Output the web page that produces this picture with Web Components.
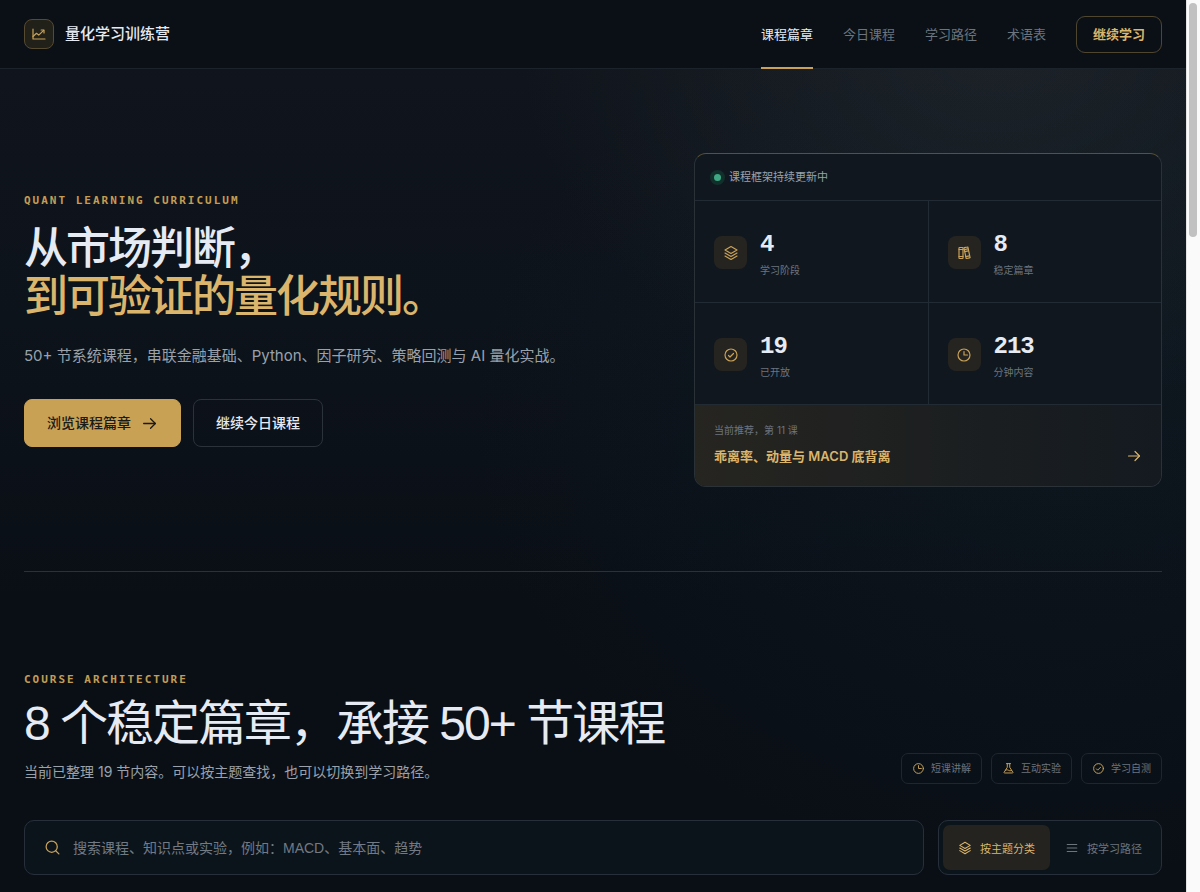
<!DOCTYPE html>
<html lang="zh-CN">
<head>
<meta charset="UTF-8" />
<meta name="viewport" content="width=device-width, initial-scale=1" />
<title>量化学习训练营</title>
<style>
  :root {
    --gold: #c9a257;
    --gold-bright: #dbb56c;
    --text: #e6eaf3;
    --text-soft: #9aa1ab;
    --text-muted: #6c747e;
    --line: #222b33;
    --display: "Liberation Sans", "Noto Sans CJK SC", sans-serif;
  }
  body {
    margin: 0;
    background: #0a0f16;
    color: var(--text);
    font-family: Inter, "Noto Sans CJK SC", sans-serif;
  }
</style>
</head>
<body>
<app-shell>
  <site-header slot="header">
    <nav-link href="#chapters" active>课程篇章</nav-link>
    <nav-link href="#today">今日课程</nav-link>
    <nav-link href="#path">学习路径</nav-link>
    <nav-link href="#glossary">术语表</nav-link>
  </site-header>

  <hero-section>
    <eye-brow>QUANT LEARNING CURRICULUM</eye-brow>
    <span slot="title">从市场判断，</span>
    <span slot="accent">到可验证的量化规则。</span>
    <span slot="lead">50+ 节系统课程，串联金融基础、Python、因子研究、策略回测与 AI 量化实战。</span>
    <action-button slot="actions" href="#chapters" variant="primary" icon="arrow">浏览课程篇章</action-button>
    <action-button slot="actions" href="#today">继续今日课程</action-button>
    <course-panel slot="panel">
      <span slot="status">课程框架持续更新中</span>
      <stat-cell icon="stack" value="4">学习阶段</stat-cell>
      <stat-cell icon="books" value="8">稳定篇章</stat-cell>
      <stat-cell icon="check" value="19">已开放</stat-cell>
      <stat-cell icon="clock" value="213">分钟内容</stat-cell>
      <span slot="hint">当前推荐，第 11 课</span>
      <span slot="lesson">乖离率、动量与 MACD 底背离</span>
    </course-panel>
  </hero-section>

  <course-section id="chapters">
    <eye-brow slot="eyebrow">COURSE ARCHITECTURE</eye-brow>
    <span slot="title">8 个稳定篇章，承接 50+ 节课程</span>
    <span slot="lead">当前已整理 19 节内容。可以按主题查找，也可以切换到学习路径。</span>
    <feature-chip slot="chips" icon="clock">短课讲解</feature-chip>
    <feature-chip slot="chips" icon="flask">互动实验</feature-chip>
    <feature-chip slot="chips" icon="check">学习自测</feature-chip>
    <search-box slot="tools" placeholder="搜索课程、知识点或实验，例如：MACD、基本面、趋势"></search-box>
    <view-switch slot="tools"></view-switch>
  </course-section>
</app-shell>

<script>
// Icons are drawn on a 256 grid
const ICONS = {
  chart: `<path d="M32 48v160h192"/><path d="m32 168 56-52 36 30 78-76"/><path d="M162 64h46v46"/>`,
  stack: `<path d="m32 80 96 56 96-56-96-56Z"/><path d="m32 128 96 56 96-56"/><path d="m32 176 96 56 96-56"/>`,
  books: `<rect x="48" y="40" width="64" height="176" rx="8"/><path d="M48 72h64M48 184h64"/>
    <path d="m134 42 47-10a8 8 0 0 1 10 6l33 158a8 8 0 0 1-6 10l-47 10a8 8 0 0 1-10-6L128 52a8 8 0 0 1 6-10Z"/>
    <path d="m135 75 55-12M141 106l55-12M158 186l55-12"/>`,
  check: `<circle cx="128" cy="128" r="96"/><path d="m88 136 24 24 56-56"/>`,
  clock: `<circle cx="128" cy="128" r="96"/><path d="M128 72v56h56"/>`,
  arrow: `<path d="M40 128h176"/><path d="m144 56 72 72-72 72"/>`,
  search: `<circle cx="116" cy="116" r="84"/><path d="m176 176 48 48"/>`,
  flask: `<path d="M88 32h80"/><path d="M104 32v72L41 204a8 8 0 0 0 7 12h160a8 8 0 0 0 7-12l-63-100V32"/><path d="M68 162c26-14 44-8 62 2s36 12 58 2"/>`,
  list: `<path d="M40 64h176M40 128h176M40 192h176"/>`,
};

class UiIcon extends HTMLElement {
  constructor() {
    super();
    this.shadow = this.attachShadow({ mode: "open" });
  }

  connectedCallback() {
    this.shadow.innerHTML = `
      <style>
        :host {
          display: block;
          flex: none;
          width: 16px;
          height: 16px;
        }
        svg {
          display: block;
          width: 100%;
          height: 100%;
          fill: none;
          stroke: currentColor;
          stroke-width: 19;
          stroke-linecap: round;
          stroke-linejoin: round;
        }
      </style>
      <svg viewBox="0 0 256 256" aria-hidden="true">${ICONS[this.getAttribute("name")]}</svg>
    `;
  }
}

class AppShell extends HTMLElement {
  constructor() {
    super();
    this.shadow = this.attachShadow({ mode: "open" });
  }

  connectedCallback() {
    this.shadow.innerHTML = `
      <style>
        :host {
          display: grid;
          grid-template-columns: minmax(0, 1fr) 14px;
          height: 100vh;
          overflow: hidden;
        }
        .page {
          overflow: hidden;
          background:
            radial-gradient(ellipse 480px 380px at 84% 40px, rgba(110, 125, 115, 0.12), transparent),
            radial-gradient(ellipse 600px 460px at 90% 420px, rgba(30, 70, 80, 0.1), transparent),
            linear-gradient(180deg, #11151d 0, #0d131b 320px, #0a0f16 600px);
        }
        .track {
          background: #fafafa;
          border-left: 1px solid #e4e4e4;
          padding: 3px 2px;
        }
        .thumb {
          height: 234px;
          width: 8px;
          border-radius: 4px;
          background: #c1c1c1;
        }
      </style>
      <div class="page">
        <slot name="header"></slot>
        <main><slot></slot></main>
      </div>
      <div class="track"><div class="thumb"></div></div>
    `;
  }
}

class SiteHeader extends HTMLElement {
  constructor() {
    super();
    this.shadow = this.attachShadow({ mode: "open" });
  }

  connectedCallback() {
    this.shadow.innerHTML = `
      <style>
        :host {
          display: block;
        }
        header {
          display: flex;
          align-items: center;
          justify-content: space-between;
          height: 68px;
          padding: 0 24px;
          background: #0a1016;
          border-bottom: 1px solid #1c242b;
        }
        .brand {
          display: flex;
          align-items: center;
          gap: 11px;
          color: var(--text);
          font-size: 15px;
          font-weight: 500;
          line-height: 28px;
          text-decoration: none;
        }
        .mark {
          display: grid;
          place-items: center;
          width: 28px;
          height: 28px;
          border: 1px solid #564a31;
          border-radius: 8px;
          background: #222119;
          color: var(--gold);
        }
        .right, nav {
          display: flex;
          align-items: center;
          gap: 30px;
        }
        .cta {
          padding: 0 16px;
          border: 1px solid #4f4630;
          border-radius: 9px;
          color: var(--gold-bright);
          font-size: 13px;
          font-weight: 700;
          line-height: 35px;
          text-decoration: none;
        }
      </style>
      <header>
        <a class="brand" href="#"><span class="mark"><ui-icon name="chart"></ui-icon></span>量化学习训练营</a>
        <div class="right">
          <nav><slot></slot></nav>
          <a class="cta" href="#continue">继续学习</a>
        </div>
      </header>
    `;
  }
}

class NavLink extends HTMLElement {
  constructor() {
    super();
    this.shadow = this.attachShadow({ mode: "open" });
  }

  connectedCallback() {
    this.shadow.innerHTML = `
      <style>
        :host {
          display: block;
          font-size: 13px;
        }
        a {
          display: block;
          position: relative;
          color: var(--text-muted);
          line-height: 68px;
          text-decoration: none;
        }
        :host([active]) a {
          color: var(--text);
        }
        :host([active]) a::after {
          content: "";
          position: absolute;
          left: 0;
          right: 0;
          bottom: -1px;
          height: 2px;
          background: var(--gold);
        }
      </style>
      <a href="${this.getAttribute("href")}"><slot></slot></a>
    `;
  }
}

class EyeBrow extends HTMLElement {
  constructor() {
    super();
    this.shadow = this.attachShadow({ mode: "open" });
  }

  connectedCallback() {
    this.shadow.innerHTML = `
      <style>
        :host {
          display: block;
          color: #c39d54;
          font-family: "DejaVu Sans Mono", monospace;
          font-size: 11px;
          font-weight: 700;
          letter-spacing: 2px;
          line-height: 16px;
        }
      </style>
      <slot></slot>
    `;
  }
}

class HeroSection extends HTMLElement {
  constructor() {
    super();
    this.shadow = this.attachShadow({ mode: "open" });
  }

  connectedCallback() {
    this.shadow.innerHTML = `
      <style>
        :host {
          display: block;
          padding: 0 24px;
        }
        section {
          display: grid;
          grid-template-columns: minmax(0, 21fr) minmax(0, 16fr);
          gap: 56px;
          align-items: center;
          padding: 84px 0;
          border-bottom: 1px solid #2a3138;
        }
        h1 {
          margin: 16px 0 22px;
          font-family: var(--display);
          font-size: 44px;
          font-weight: 500;
          letter-spacing: -2px;
          line-height: 48px;
        }
        h1 ::slotted(span) {
          display: block;
        }
        h1 slot {
          display: block;
        }
        .accent {
          color: var(--gold-bright);
        }
        p {
          margin: 0 0 30px;
          color: var(--text-soft);
          font-size: 15px;
          line-height: 26px;
        }
        .actions {
          display: flex;
          gap: 12px;
        }
      </style>
      <section>
        <div>
          <slot></slot>
          <h1><slot name="title"></slot><slot name="accent" class="accent"></slot></h1>
          <p><slot name="lead"></slot></p>
          <div class="actions"><slot name="actions"></slot></div>
        </div>
        <slot name="panel"></slot>
      </section>
    `;
  }
}

class ActionButton extends HTMLElement {
  constructor() {
    super();
    this.shadow = this.attachShadow({ mode: "open" });
  }

  connectedCallback() {
    const icon = this.getAttribute("icon");
    this.shadow.innerHTML = `
      <style>
        :host {
          display: block;
        }
        a {
          display: flex;
          align-items: center;
          gap: 10px;
          padding: 0 22px;
          border: 1px solid #2b323a;
          border-radius: 8px;
          color: var(--text);
          font-size: 14px;
          font-weight: 500;
          line-height: 46px;
          text-decoration: none;
        }
        :host([variant="primary"]) a {
          background: #c8a155;
          border-color: #c8a155;
          color: #1b1a14;
        }
        ui-icon {
          width: 17px;
          height: 17px;
        }
      </style>
      <a href="${this.getAttribute("href")}"><slot></slot>${icon ? `<ui-icon name="${icon}"></ui-icon>` : ""}</a>
    `;
  }
}

class CoursePanel extends HTMLElement {
  constructor() {
    super();
    this.shadow = this.attachShadow({ mode: "open" });
  }

  connectedCallback() {
    this.shadow.innerHTML = `
      <style>
        :host {
          display: block;
        }
        .panel {
          overflow: hidden;
          border: 1px solid #2a3238;
          border-top-color: #5a5138;
          border-radius: 12px;
          background: #10171e;
        }
        .status {
          display: flex;
          align-items: center;
          gap: 8px;
          padding: 0 19px;
          color: var(--text-soft);
          font-size: 11px;
          line-height: 46px;
        }
        .dot {
          width: 7px;
          height: 7px;
          border-radius: 50%;
          background: #3fa783;
          box-shadow: 0 0 0 4px #11302c;
        }
        .stats {
          display: grid;
          grid-template-columns: 1fr 1fr;
          gap: 1px;
          padding: 1px 0;
          background: var(--line);
        }
        .next {
          display: flex;
          align-items: flex-end;
          justify-content: space-between;
          padding: 18px 19px;
          background: linear-gradient(90deg, #262520, #141a20);
          color: var(--gold-bright);
          text-decoration: none;
        }
        .hint {
          display: block;
          margin-bottom: 7px;
          color: var(--text-muted);
          font-size: 10px;
          line-height: 14px;
        }
        .lesson {
          display: block;
          font-size: 13px;
          font-weight: 600;
          line-height: 24px;
        }
        .next ui-icon {
          margin-bottom: 4px;
        }
      </style>
      <div class="panel">
        <div class="status"><span class="dot"></span><slot name="status"></slot></div>
        <div class="stats"><slot></slot></div>
        <a class="next" href="#lesson-11">
          <span>
            <slot name="hint" class="hint"></slot>
            <slot name="lesson" class="lesson"></slot>
          </span>
          <ui-icon name="arrow"></ui-icon>
        </a>
      </div>
    `;
  }
}

class StatCell extends HTMLElement {
  constructor() {
    super();
    this.shadow = this.attachShadow({ mode: "open" });
  }

  connectedCallback() {
    this.shadow.innerHTML = `
      <style>
        :host {
          display: flex;
          align-items: center;
          gap: 13px;
          padding: 28px 19px 26px;
          background: #10171e;
        }
        .tile {
          display: grid;
          place-items: center;
          width: 33px;
          height: 33px;
          border-radius: 8px;
          background: #252420;
          color: var(--gold);
        }
        .value {
          display: block;
          margin-bottom: 3px;
          font-family: "Liberation Mono", monospace;
          font-size: 24px;
          font-weight: 700;
          letter-spacing: -1px;
          line-height: 32px;
        }
        .label {
          display: block;
          color: var(--text-muted);
          font-size: 10px;
          line-height: 12px;
        }
      </style>
      <span class="tile"><ui-icon name="${this.getAttribute("icon")}"></ui-icon></span>
      <span>
        <strong class="value">${this.getAttribute("value")}</strong>
        <span class="label"><slot></slot></span>
      </span>
    `;
  }
}

class CourseSection extends HTMLElement {
  constructor() {
    super();
    this.shadow = this.attachShadow({ mode: "open" });
  }

  connectedCallback() {
    this.shadow.innerHTML = `
      <style>
        :host {
          display: block;
          padding: 100px 24px 16px;
        }
        .head {
          display: flex;
          align-items: flex-end;
          justify-content: space-between;
          margin-bottom: 36px;
        }
        h2 {
          margin: 8px 0;
          font-family: var(--display);
          font-size: 48px;
          font-weight: 400;
          letter-spacing: -2px;
          line-height: 56px;
        }
        p {
          margin: 0;
          color: var(--text-soft);
          font-size: 14px;
          line-height: 24px;
        }
        .chips {
          display: flex;
          gap: 9px;
        }
        .tools {
          display: flex;
          gap: 14px;
        }
      </style>
      <section>
        <div class="head">
          <div>
            <slot name="eyebrow"></slot>
            <h2><slot name="title"></slot></h2>
            <p><slot name="lead"></slot></p>
          </div>
          <div class="chips"><slot name="chips"></slot></div>
        </div>
        <div class="tools"><slot name="tools"></slot></div>
      </section>
    `;
  }
}

class FeatureChip extends HTMLElement {
  constructor() {
    super();
    this.shadow = this.attachShadow({ mode: "open" });
  }

  connectedCallback() {
    this.shadow.innerHTML = `
      <style>
        :host {
          display: flex;
          align-items: center;
          gap: 6px;
          padding: 0 10px;
          border: 1px solid #1e262e;
          border-radius: 7px;
          color: var(--text-muted);
          font-size: 10px;
          line-height: 29px;
          white-space: nowrap;
        }
        ui-icon {
          width: 13px;
          height: 13px;
          color: var(--gold);
        }
      </style>
      <ui-icon name="${this.getAttribute("icon")}"></ui-icon><slot></slot>
    `;
  }
}

class SearchBox extends HTMLElement {
  constructor() {
    super();
    this.shadow = this.attachShadow({ mode: "open" });
  }

  connectedCallback() {
    const placeholder = this.getAttribute("placeholder");
    this.shadow.innerHTML = `
      <style>
        :host {
          display: block;
          flex: 1;
          min-width: 0;
        }
        label {
          display: flex;
          align-items: center;
          gap: 12px;
          padding: 0 19px;
          border: 1px solid #27303a;
          border-radius: 10px;
          background: #0c141b;
          color: var(--gold);
        }
        ui-icon {
          width: 17px;
          height: 17px;
        }
        input {
          flex: 1;
          min-width: 0;
          height: 53px;
          padding: 0;
          border: 0;
          outline: 0;
          background: none;
          color: var(--text);
          font-family: var(--display);
          font-size: 14px;
        }
        input::placeholder {
          color: #727a84;
        }
      </style>
      <label><ui-icon name="search"></ui-icon><input type="search" aria-label="搜索课程" placeholder="${placeholder}" /></label>
    `;
  }
}

class ViewSwitch extends HTMLElement {
  constructor() {
    super();
    this.shadow = this.attachShadow({ mode: "open" });
  }

  connectedCallback() {
    this.shadow.innerHTML = `
      <style>
        :host {
          display: flex;
          padding: 4px;
          border: 1px solid #27303a;
          border-radius: 10px;
          background: #0c141b;
        }
        button {
          display: flex;
          align-items: center;
          gap: 8px;
          padding: 0 15px;
          border: 0;
          border-radius: 7px;
          background: none;
          color: var(--text-muted);
          font-family: inherit;
          font-size: 11px;
          cursor: pointer;
        }
        button[aria-pressed="true"] {
          background: #24231f;
          color: var(--gold-bright);
        }
        ui-icon {
          width: 14px;
          height: 14px;
        }
      </style>
      <button type="button" aria-pressed="true"><ui-icon name="stack"></ui-icon>按主题分类</button>
      <button type="button" aria-pressed="false"><ui-icon name="list"></ui-icon>按学习路径</button>
    `;

    const buttons = this.shadow.querySelectorAll("button");
    buttons.forEach((button) => {
      button.addEventListener("click", () => {
        buttons.forEach((b) => b.setAttribute("aria-pressed", b === button));
      });
    });
  }
}

customElements.define("ui-icon", UiIcon);
customElements.define("app-shell", AppShell);
customElements.define("site-header", SiteHeader);
customElements.define("nav-link", NavLink);
customElements.define("eye-brow", EyeBrow);
customElements.define("hero-section", HeroSection);
customElements.define("action-button", ActionButton);
customElements.define("course-panel", CoursePanel);
customElements.define("stat-cell", StatCell);
customElements.define("course-section", CourseSection);
customElements.define("feature-chip", FeatureChip);
customElements.define("search-box", SearchBox);
customElements.define("view-switch", ViewSwitch);
</script>
</body>
</html>
